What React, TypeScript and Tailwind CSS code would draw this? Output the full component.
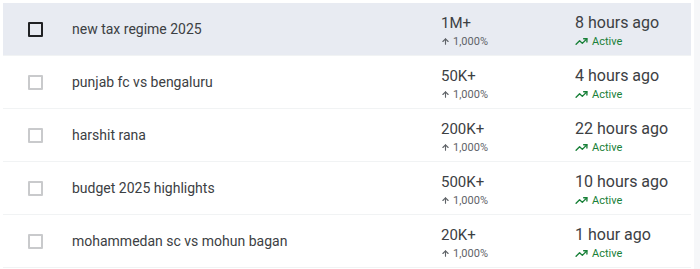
import { TrendingUp, ArrowUp } from "lucide-react";

interface Trend {
  title: string;
  volume: string;
  started: string;
}

const trends: Trend[] = [
  { title: "new tax regime 2025", volume: "1M+", started: "8 hours ago" },
  { title: "punjab fc vs bengaluru", volume: "50K+", started: "4 hours ago" },
  { title: "harshit rana", volume: "200K+", started: "22 hours ago" },
  { title: "budget 2025 highlights", volume: "500K+", started: "10 hours ago" },
  { title: "mohammedan sc vs mohun bagan", volume: "20K+", started: "1 hour ago" },
];

function Row({ trend, selected }: { trend: Trend; selected: boolean }) {
  return (
    <div
      className={`flex h-[53px] items-center border-b border-[#f1f3f4] ${
        selected ? "bg-[#e8ebf2]" : "bg-white"
      }`}
    >
      <div className="flex w-[69px] shrink-0 pl-[25px]">
        <div
          className={`h-[15px] w-[15px] rounded-[1px] border-2 ${
            selected ? "border-[#202124]" : "border-[#c9cacc]"
          }`}
        />
      </div>
      <div className="w-[369px] shrink-0 text-[14px] text-[#3c4043]">{trend.title}</div>
      <div className="flex w-[134px] shrink-0 flex-col pt-[3px]">
        <span className="text-[15px] leading-[22px] text-[#3c4043]">{trend.volume}</span>
        <span className="flex items-center gap-[3px] text-[11px] leading-[16px] text-[#5f6368]">
          <ArrowUp size={9} strokeWidth={3} />
          1,000%
        </span>
      </div>
      <div className="flex flex-col pt-[3px]">
        <span className="text-[16px] leading-[22px] text-[#3c4043]">{trend.started}</span>
        <span className="flex items-center gap-[4px] text-[11px] leading-[16px] text-[#188038]">
          <TrendingUp size={13} strokeWidth={2.5} />
          Active
        </span>
      </div>
    </div>
  );
}

export default function App() {
  return (
    <div className="flex h-[269px] w-[700px] bg-white font-['Roboto',sans-serif]">
      <div className="w-[691px] pl-[3px] pt-[3px]">
        {trends.map((t, i) => (
          <Row key={t.title} trend={t} selected={i === 0} />
        ))}
      </div>
      <div className="ml-[3px] w-[6px] bg-[#f6f7f9]" />
    </div>
  );
}
